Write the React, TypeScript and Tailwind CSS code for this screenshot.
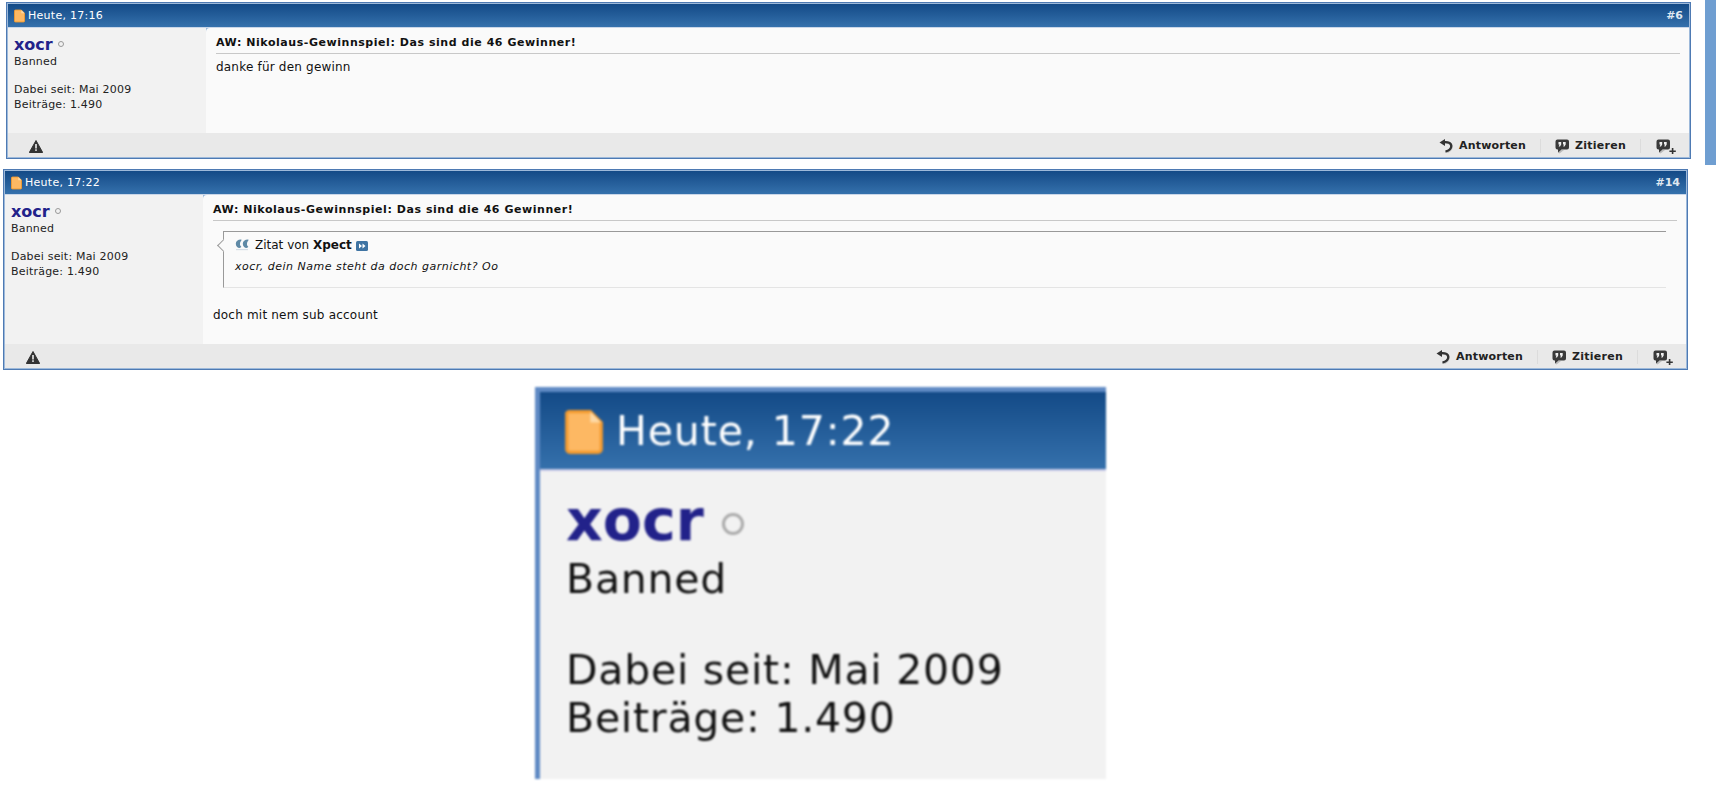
import React from "react";

const FONT = "font-['DejaVu_Sans',Verdana,sans-serif]";

function FileIcon({ className }: { className?: string }) {
  return (
    <svg viewBox="0 0 12 14" className={className}>
      <path d="M1.500.5h6.500l3.500 3.500v8.500a1 1 0 0 1-1 1h-9a1 1 0 0 1-1-1v-11.500a1 1 0 0 1 1-.500z" fill="#fdb863" stroke="#f39a2e" />
      <path d="M8 .5v3.500h3.500" fill="#fdd9a6" />
    </svg>
  );
}

function WarnIcon() {
  return (
    <svg viewBox="0 0 14 13" className="h-[13px] w-[14px]">
      <path d="M7 .5 13.700 12.500H.3z" fill="#333" stroke="#333" strokeLinejoin="round" />
      <rect x="6.200" y="4" width="1.600" height="4.500" fill="#eee" />
      <rect x="6.200" y="9.300" width="1.600" height="1.600" fill="#eee" />
    </svg>
  );
}

function ReplyIcon() {
  return (
    <svg viewBox="0 0 15 14" className="h-[14px] w-[15px]">
      <path d="M5 2.500c4.500-.5 8 .8 8 4.200 0 3-2.500 5-6 6" fill="none" stroke="#c4c4c4" strokeWidth="2.500" transform="translate(-.6 .9)" />
      <path d="M4.500 3.200c4.500-.5 7.800.6 7.800 3.800 0 2.800-2.300 4.600-5.800 5.500" fill="none" stroke="#333" strokeWidth="2.300" />
      <path d="M6 0 .5 3.400 6 7z" fill="#333" />
    </svg>
  );
}

function QuoteBubble({ plus }: { plus?: boolean }) {
  return (
    <svg viewBox={plus ? "0 0 20 15" : "0 0 15 15"} className={plus ? "h-[15px] w-[20px]" : "h-[15px] w-[15px]"}>
      <path d="M3 13.500 4 11h5l-4.500 3.500z" fill="#bbb" />
      <path d="M2.500.5h9.500a2 2 0 0 1 2 2v6a2 2 0 0 1-2 2H6.500l-3.500 3v-3h-.5a2 2 0 0 1-2-2v-6a2 2 0 0 1 2-2z" fill="#3a3a3a" />
      <path d="M3.500 3h2.700v2.400L5 7.600H3.700l.8-2.100h-1zM8 3h2.700v2.400L9.500 7.600H8.200l.8-2.100H8z" fill="#f0f0f0" />
      {plus && <path d="M15.800 9h1.600v2.400h2.400V13h-2.400v2h-1.600v-2h-2.400v-1.600h2.400z" fill="#333" />}
    </svg>
  );
}

function QuoteMarks() {
  return (
    <svg viewBox="0 0 14 12" className="h-[12px] w-[14px]">
      <path d="M6 .5C2.800.5.800 2.300.8 4.800c0 2.600 1.800 4.200 3.700 4.200.8 0 1.500-.5 1.800-1.200C5.200 6.800 4.800 5.800 5 4.500 5.200 3 6 1.800 6.800 1.100z" fill="#5f8aa6" />
      <path d="M13 .5C9.800.5 7.800 2.300 7.800 4.800c0 2.600 1.800 4.200 3.700 4.200.8 0 1.500-.5 1.800-1.200-1.100-1-1.500-2-1.300-3.300.2-1.500 1-2.700 1.800-3.400z" fill="#5f8aa6" />
      <rect x="1" y="10" width="12" height="1.200" fill="#d5dee6" />
    </svg>
  );
}

function ViewPostIcon() {
  return (
    <svg viewBox="0 0 12 10" className="h-[10px] w-[12px]">
      <rect width="12" height="10" rx="1.500" fill="#3f74a3" />
      <path d="M3 2.500 6 5 3 7.500zM6.500 2.500 9.500 5 6.500 7.500z" fill="#fff" />
    </svg>
  );
}

function Header({ date, num }: { date: string; num: string }) {
  return (
    <div className="flex h-[24px] items-center justify-between border-b border-[#c9d6e8] bg-gradient-to-b from-[#134a87] to-[#3571ac] pl-[6px] pr-[6px] pt-[1px] text-[11px] text-white">
      <span className="flex items-center gap-[3px] tracking-[0.27px]">
        <FileIcon className="h-[14px] w-[11px]" />
        {date}
      </span>
      <span className="font-bold text-[#dfe7f0]">{num}</span>
    </div>
  );
}

function Footer() {
  return (
    <div className="flex h-[24px] items-center justify-between bg-[#e9e9e9] pl-[21px] pr-[13px] pt-[2px] text-[11px] font-bold text-[#222]">
      <WarnIcon />
      <div className="flex items-center">
        <ReplyIcon />
        <span className="ml-[5px] tracking-[0.2px]">Antworten</span>
        <span className="ml-[14px] mr-[12px] h-[14px] w-px bg-[#dcdcdc]" />
        <span className="ml-[2px]"><QuoteBubble /></span>
        <span className="ml-[5px] tracking-[0.25px]">Zitieren</span>
        <span className="ml-[14px] mr-[15px] h-[14px] w-px bg-[#dcdcdc]" />
        <QuoteBubble plus />
      </div>
    </div>
  );
}

function UserInfo() {
  return (
    <div className="w-[198px] shrink-0 bg-[#f2f2f2] pl-[6px] pt-[6px] text-[11px] leading-[15px] tracking-[0.2px] text-[#222]">
      <div className="flex h-[20px] items-center tracking-normal">
        <span className="text-[16px] font-bold text-[#22228a]">xocr</span>
        <span className="ml-[5px] h-[6px] w-[6px] rounded-full border border-[#999]" />
      </div>
      <div>Banned</div>
      <div className="mt-[13px]">Dabei seit: Mai 2009</div>
      <div>Beiträge: 1.490</div>
    </div>
  );
}

function Post({ date, num, className, bodyHeight, children }: { date: string; num: string; className: string; bodyHeight: string; children: React.ReactNode }) {
  return (
    <div className={`w-[1685px] border border-[#4e7ab3] bg-[#9db9da] p-px ${className}`}>
      <Header date={date} num={num} />
      <div className={`flex ${bodyHeight}`}>
        <UserInfo />
        <div className="min-w-0 flex-1 rounded-tl-[4px] bg-[#fafafa] pl-[10px] pr-[9px] pt-[7px] text-[12px] tracking-[0.2px] text-[#111]">
          <div className="h-[19px] border-b border-[#c8c8c8] text-[11px] font-bold leading-[16px] tracking-[0.55px]">
            AW: Nikolaus-Gewinnspiel: Das sind die 46 Gewinner!
          </div>
          {children}
        </div>
      </div>
      <Footer />
    </div>
  );
}

export default function App() {
  return (
    <div className={`relative h-[802px] overflow-hidden bg-white pt-[2px] ${FONT}`}>
      {/* edge of the page behind the crops */}
      <div className="absolute right-0 top-0 h-[165px] w-[11px] bg-[#6f9ed1]" />

      <Post date="Heute, 17:16" num="#6" className="ml-[6px]" bodyHeight="h-[105px]">
        <div className="mt-[6px] leading-[14px]">danke für den gewinn</div>
      </Post>

      <Post date="Heute, 17:22" num="#14" className="ml-[3px] mt-[10px]" bodyHeight="h-[149px]">
        <div className="relative ml-[10px] mr-[11px] mt-[10px] h-[57px] border-b border-l border-t border-b-[#e4e4e4] border-l-[#999] border-t-[#999] pl-[11px] pt-[5px] text-[12px] tracking-normal">
          <span className="absolute left-[-5px] top-[9px] h-[9px] w-[9px] rotate-45 border-b border-l border-[#999] bg-[#fafafa]" />
          <div className="flex h-[16px] items-center">
            <QuoteMarks />
            <span className="ml-[6px]">Zitat von <b>Xpect</b></span>
            <span className="ml-[4px] mt-[2px]"><ViewPostIcon /></span>
          </div>
          <div className="mt-[6px] text-[11px] italic tracking-[0.5px]">xocr, dein Name steht da doch garnicht? Oo</div>
        </div>
        <div className="mt-[20px] leading-[14px]">doch mit nem sub account</div>
      </Post>

      {/* enlarged crop of the second post */}
      <div className="ml-[535px] mt-[17px] h-[392px] w-[571px] overflow-hidden border-l-[5px] border-t-[5px] border-[#5f8ac4] blur-[0.9px]">
        <div className="flex h-[79px] items-center gap-[13px] border-b-[2px] border-[#c9c9e8] bg-gradient-to-b from-[#134a87] to-[#3571ac] pl-[25px] pt-[2px] text-[41px] tracking-[0.9px] text-white">
          <FileIcon className="h-[44px] w-[38px]" />
          Heute, 17:22
        </div>
        <div className="h-full bg-[#f2f2f2] pl-[26px] text-[41px] leading-[48px] tracking-[0.75px] text-[#111]">
          <div className="flex h-[84px] items-end tracking-normal">
            <span className="text-[57px] font-bold leading-[70px] text-[#22228a]">xocr</span>
            <span className="mb-[20px] ml-[18px] h-[22px] w-[22px] rounded-full border-[3px] border-[#aaa]" />
          </div>
          <div>Banned</div>
          <div className="mt-[43px]">Dabei seit: Mai 2009</div>
          <div>Beiträge: 1.490</div>
        </div>
      </div>
    </div>
  );
}
